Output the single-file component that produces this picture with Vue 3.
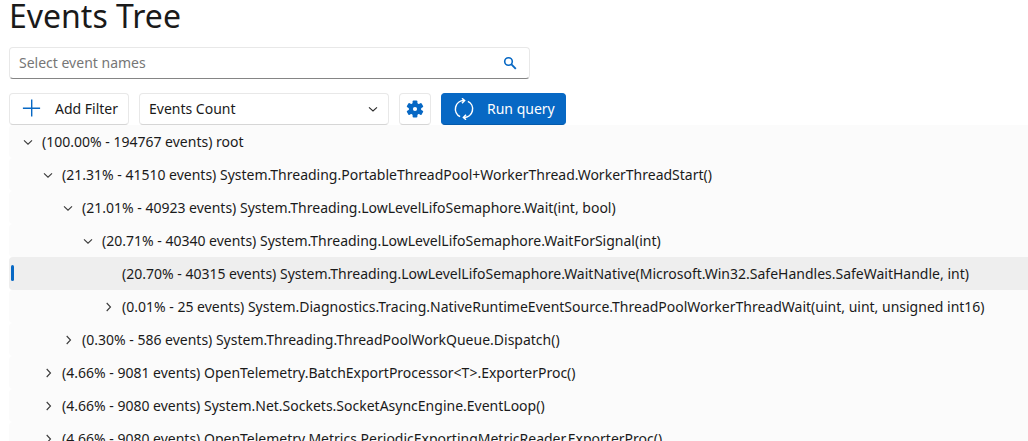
<script setup>
const rows = [
  { depth: 0, open: true, text: '(100.00% - 194767 events) root' },
  { depth: 1, open: true, text: '(21.31% - 41510 events) System.Threading.PortableThreadPool+WorkerThread.WorkerThreadStart()' },
  { depth: 2, open: true, text: '(21.01% - 40923 events) System.Threading.LowLevelLifoSemaphore.Wait(int, bool)' },
  { depth: 3, open: true, text: '(20.71% - 40340 events) System.Threading.LowLevelLifoSemaphore.WaitForSignal(int)' },
  { depth: 4, leaf: true, selected: true, text: '(20.70% - 40315 events) System.Threading.LowLevelLifoSemaphore.WaitNative(Microsoft.Win32.SafeHandles.SafeWaitHandle, int)' },
  { depth: 4, text: '(0.01% - 25 events) System.Diagnostics.Tracing.NativeRuntimeEventSource.ThreadPoolWorkerThreadWait(uint, uint, unsigned int16)' },
  { depth: 2, text: '(0.30% - 586 events) System.Threading.ThreadPoolWorkQueue.Dispatch()' },
  { depth: 1, text: '(4.66% - 9081 events) OpenTelemetry.BatchExportProcessor<T>.ExporterProc()' },
  { depth: 1, text: '(4.66% - 9080 events) System.Net.Sockets.SocketAsyncEngine.EventLoop()' },
  { depth: 1, text: '(4.66% - 9080 events) OpenTelemetry.Metrics.PeriodicExportingMetricReader.ExporterProc()' },
]
</script>

<template>
  <main class="page">
    <h1>Events Tree</h1>
    <div class="search">
      <input type="text" placeholder="Select event names" />
      <svg class="lens" width="14" height="14" viewBox="0 0 14 14">
        <circle cx="5.5" cy="5.5" r="3.8" fill="none" stroke="#0768c4" stroke-width="1.6" />
        <path d="M8.2 8.2L12.8 12.8" stroke="#0768c4" stroke-width="1.9" />
      </svg>
    </div>
    <div class="toolbar">
      <button class="btn add">
        <svg width="20" height="20" viewBox="0 0 20 20">
          <path d="M10.7 1.4v17.2M1.9 10.3h17.2" stroke="#0768c4" stroke-width="1.4" fill="none" />
        </svg>
        <span>Add Filter</span>
      </button>
      <button class="btn select">
        <span>Events Count</span>
        <svg width="12" height="12" viewBox="0 0 12 12">
          <path d="M2 4.4L6 8L10 4.4" stroke="#2b2b2b" stroke-width="1.1" fill="none" />
        </svg>
      </button>
      <button class="btn gear" aria-label="Settings">
        <svg width="18" height="18" viewBox="-9 -9 18 18">
          <g fill="#0768c4">
            <rect v-for="a in [0, 60, 120]" :key="a" x="-2.4" y="-8.5" width="4.8" height="17" rx="1" :transform="`rotate(${a})`" />
            <circle r="6.2" />
          </g>
          <circle r="2.1" fill="#fff" />
        </svg>
      </button>
      <button class="btn run">
        <svg width="20" height="22" viewBox="0 0 20 22" fill="none" stroke="#fff" stroke-width="1.5">
          <path d="M6.1 18.6A8.5 8.5 0 0 1 10 2.5M13.9 3.4A8.5 8.5 0 0 1 10 19.5" />
          <path d="M8 .3L10.6 2.6L8 5.3M12 21.7L9.4 19.4L12 16.7" />
        </svg>
        <span>Run query</span>
      </button>
    </div>
    <div class="tree" role="tree">
      <div v-for="(row, i) in rows" :key="i" class="row" :class="{ selected: row.selected }" :style="{ paddingLeft: 13 + row.depth * 20 + 'px' }" role="treeitem">
        <span class="toggle">
          <svg v-if="!row.leaf" width="12" height="12" viewBox="0 0 12 12" fill="none" stroke="#3a3a3a" stroke-width="1.1">
            <path v-if="row.open" d="M2 4.3L6 8.2L10 4.3" />
            <path v-else d="M4.7 2L8.5 6L4.7 10" />
          </svg>
        </span>
        <span>{{ row.text }}</span>
      </div>
    </div>
  </main>
</template>

<style>
body {
  margin: 0;
  background: #fff;
  overflow: hidden;
}
</style>

<style scoped>
.page {
  box-sizing: border-box;
  height: 441px;
  padding-left: 9px;
  overflow: hidden;
  font-family: "Noto Sans", sans-serif;
  font-size: 14px;
  color: #1a1a1a;
}
h1 {
  margin: 0;
  height: 47px;
  line-height: 31px;
  font-size: 32px;
  font-weight: 400;
}
.search {
  box-sizing: border-box;
  display: flex;
  align-items: center;
  width: 521px;
  height: 32px;
  padding: 0 12px 0 9px;
  border: 1px solid #e8e8e8;
  border-bottom-color: #858585;
  border-radius: 4px;
}
.search input {
  flex: 1;
  min-width: 0;
  padding: 0 0 2px;
  border: 0;
  outline: 0;
  background: transparent;
  font: inherit;
}
.search input::placeholder {
  color: #767676;
}
.toolbar {
  display: flex;
  gap: 10px;
  margin-top: 14px;
}
.btn {
  box-sizing: border-box;
  display: flex;
  align-items: center;
  height: 32px;
  padding: 0;
  border: 1px solid #e8e8e8;
  border-bottom-color: #d6d6d6;
  border-radius: 4px;
  background: #fff;
  color: #1a1a1a;
  font: inherit;
  white-space: nowrap;
}
.btn span {
  padding-bottom: 2px;
}
.add {
  width: 120px;
  padding-left: 11px;
  gap: 14px;
}
.add svg {
  margin-bottom: 2px;
}
.select {
  width: 250px;
  justify-content: space-between;
  padding: 0 9px;
}
.gear {
  width: 32px;
  justify-content: center;
}
.run {
  width: 125px;
  padding-left: 12px;
  gap: 13px;
  border-color: #0768c4;
  border-bottom-color: #045aab;
  background: #0768c4;
  color: #fff;
}
.row {
  position: relative;
  box-sizing: border-box;
  display: flex;
  align-items: center;
  height: 33px;
  border-radius: 4px;
  background: #fbfbfb;
  white-space: nowrap;
}
.tree {
  margin-right: -4px;
}
.toggle {
  display: flex;
  width: 20px;
  height: 12px;
}
.selected {
  background: #eee;
}
.selected::before {
  content: "";
  position: absolute;
  left: 2px;
  top: 8px;
  width: 3px;
  height: 16px;
  border-radius: 2px;
  background: #0768c4;
}
</style>
